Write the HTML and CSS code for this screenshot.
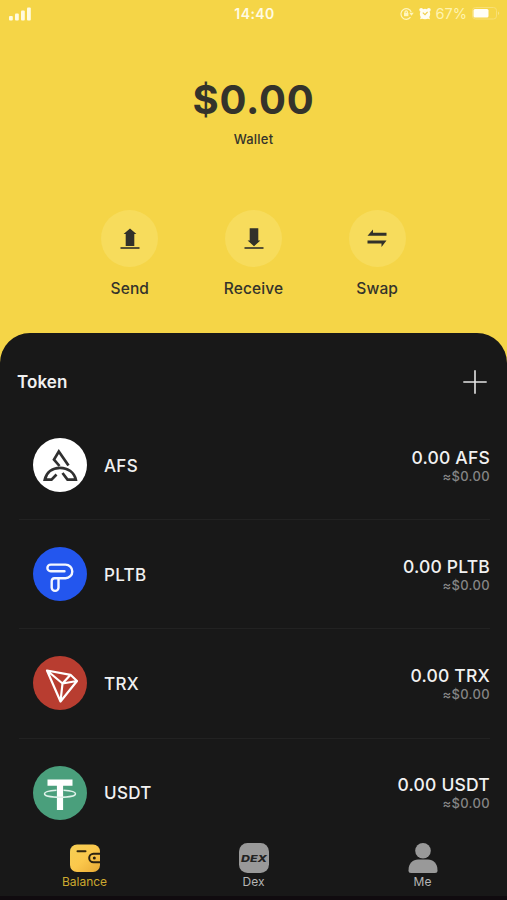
FILE: index.html
```html
<!DOCTYPE html>
<html lang="en">
<head>
<meta charset="utf-8">
<meta name="viewport" content="width=device-width, initial-scale=1">
<title>Wallet</title>
<link rel="stylesheet" href="styles.css">
</head>
<body>
<div class="app">
  <header class="status">
    <svg class="signal" width="22" height="14" viewBox="0 0 22 14" fill="#fffbe0"><rect x="0" y="9" width="3.8" height="4.5" rx="1"/><rect x="6" y="6.5" width="3.8" height="7" rx="1"/><rect x="12" y="3.6" width="3.8" height="9.9" rx="1"/><rect x="18" y=".5" width="3.8" height="13" rx="1"/></svg>
    <span class="time">14:40</span>
    <div class="indicators">
      <svg width="14" height="13" viewBox="0 0 14 13" fill="none" stroke="#fff6c0" stroke-width="1.2"><path d="M10.5 10.2A5.300 5.300 0 1 1 11.2 5"/><path d="M9.2 5.7h4.500l-2.200 3z" fill="#fff6c0" stroke="none"/><rect x="4" y="5.8" width="4.400" height="3.400" fill="#fff6c0" stroke="none"/><path d="M5 6V5a1.2 1.2 0 0 1 2.4 0v1"/></svg>
      <svg class="alarm" width="12" height="13" viewBox="0 0 12 13"><g fill="#fffdf0"><circle cx="6" cy="7" r="5.200"/><circle cx="2.2" cy="2.8" r="1.900"/><circle cx="9.8" cy="2.8" r="1.900"/><path d="M2 9.500L1 12.300 4 11.500zM10 9.500l1 2.800-3-.8z"/></g><path d="M3.800 5.600L6 7.600l2.600-2.800" fill="none" stroke="#efcf4b" stroke-width="1.2"/></svg>
      <span class="percent">67%</span>
      <svg width="28" height="13" viewBox="0 0 28 13"><rect x=".5" y=".5" width="24" height="11.5" rx="3" fill="none" stroke="#f8df74"/><rect x="1.500" y="2" width="15" height="8.5" rx="1.5" fill="#fffef6"/><path d="M26 4.5c1.6.5 1.6 3 0 3.5z" fill="#f9e384"/></svg>
    </div>
  </header>

  <section class="hero">
    <h1 class="total">$0.00</h1>
    <p class="wallet">Wallet</p>
    <nav class="actions">
      <a class="action"><span class="disc"><svg width="20" height="22" viewBox="0 0 20 22" fill="#32312a"><path d="M10 .5l6.400 5.500H14.300v12H5.700V6H3.600z"/><rect x=".5" y="19.200" width="19" height="1.600"/></svg></span>Send</a>
      <a class="action"><span class="disc"><svg width="20" height="22" viewBox="0 0 20 22" fill="#32312a"><path d="M5.700 .3h8.600V12.500h2.100L10 18.300 3.600 12.500H5.700z"/><rect x=".5" y="19.200" width="19" height="1.600"/></svg></span>Receive</a>
      <a class="action"><span class="disc"><svg width="20" height="22" viewBox="0 0 20 22" fill="#32312a"><path d="M.5 7.700L6 1.500V4.700H19.500V7.700z"/><path d="M.5 12.500H19.500L14.500 19V15.500H.5z"/></svg></span>Swap</a>
    </nav>
  </section>

  <main class="sheet">
    <div class="sheet-head">
      <h2>Token</h2>
      <svg width="24" height="24" viewBox="0 0 24 24" stroke="#e4e4e4" stroke-width="1.600"><path d="M12 .3v23.400M.3 12h23.400"/></svg>
    </div>
    <ul class="tokens">
      <li class="token">
        <svg class="coin" viewBox="0 0 54 54"><circle cx="27" cy="27" r="27" fill="#fff"/><g fill="none" stroke="#303030" stroke-width="2.700"><path d="M26.500 28L21 21.500 25.800 13.500 35.500 27.500"/><path d="M23.500 36.500L18.500 41.600H11.800C13.500 34.500 19 29.800 27 29.800S41.300 34.500 42.800 41.600H34.500L29.500 35"/></g></svg>
        <span class="name">AFS</span>
        <div class="amount"><span class="qty">0.00 AFS</span><span class="fiat">≈$0.00</span></div>
      </li>
      <li class="token">
        <svg class="coin" viewBox="0 0 54 54"><circle cx="27" cy="27" r="27" fill="#2356ee"/><path d="M31.500 24.200H17.700A3.300 3.300 0 0 1 17.700 17.600H32.500A6.800 6.800 0 0 1 32.500 31.200H21.500A3 3 0 0 0 18.700 34.200V40.500A3.400 3.400 0 0 0 25.500 40.500V32" fill="none" stroke="#f3f6ff" stroke-width="2.400" stroke-linecap="round"/></svg>
        <span class="name">PLTB</span>
        <div class="amount"><span class="qty">0.00 PLTB</span><span class="fiat">≈$0.00</span></div>
      </li>
      <li class="token">
        <svg class="coin" viewBox="0 0 54 54"><circle cx="27" cy="27" r="27" fill="#b83d30"/><path d="M14 14.500L37.500 18.800 44 25 27.500 45.500zM14 14.500L29.500 27.500 27.500 45.500M29.500 27.500L37.500 18.800M29.500 27.500L44 25" fill="none" stroke="#fff" stroke-width="2.200" stroke-linejoin="round"/></svg>
        <span class="name">TRX</span>
        <div class="amount"><span class="qty">0.00 TRX</span><span class="fiat">≈$0.00</span></div>
      </li>
      <li class="token">
        <svg class="coin" viewBox="0 0 54 54"><circle cx="27" cy="27" r="27" fill="#4a9f7c"/><path d="M14.500 13.500h25v6.300h-9.400V44h-6.200V19.800h-9.400z" fill="#fff"/><path d="M23.500 24.300C16 24.800 11.500 26 11.500 27.700c0 2.100 6.900 3.600 15.500 3.600s15.500-1.500 15.500-3.600c0-1.700-4.500-2.900-12-3.400" fill="none" stroke="#dff1e9" stroke-width="1.500"/></svg>
        <span class="name">USDT</span>
        <div class="amount"><span class="qty">0.00 USDT</span><span class="fiat">≈$0.00</span></div>
      </li>
    </ul>
  </main>

  <nav class="tabs">
    <a class="tab active"><svg width="30" height="30" viewBox="0 0 30 30"><defs><linearGradient id="gold" x1="0" y1="0" x2="1" y2="1"><stop offset="0" stop-color="#f6cf55"/><stop offset=".5" stop-color="#fbc84c"/><stop offset="1" stop-color="#e8a934"/></linearGradient></defs><rect x="0" y="1.500" width="30" height="27.500" rx="7" fill="url(#gold)"/><path d="M7.500 8.300h8" stroke="#35280f" stroke-width="2" stroke-linecap="round"/><path d="M30 10.700H23.500a4.300 4.300 0 0 0 0 8.600H30" fill="none" stroke="#2b2111" stroke-width="2"/><circle cx="24.300" cy="15" r="1.500" fill="#2b2111"/></svg>Balance</a>
    <a class="tab"><svg width="30" height="30" viewBox="0 0 30 30"><rect width="30" height="30" rx="8.500" fill="#999"/><text class="dex" x="15" y="18.500" text-anchor="middle" textLength="26" lengthAdjust="spacingAndGlyphs">DEX</text></svg>Dex</a>
    <a class="tab"><svg width="30" height="30" viewBox="0 0 30 30" fill="#999"><circle cx="15" cy="7.800" r="7.800"/><path d="M.5 27.500C.5 20 5 16.500 10 16.500H20c5 0 9.500 3.500 9.500 11Q29.500 30 27 30H3Q.5 30 .5 27.500z"/></svg>Me</a>
  </nav>
</div>
</body>
</html>
```
FILE: styles.css
```css
* { box-sizing: border-box; }

body {
  margin: 0;
  background: #f5d547;
  font-family: Inter, "Liberation Sans", sans-serif;
}

h1, h2, p, ul { margin: 0; padding: 0; }

svg { display: block; flex: none; }

.app {
  display: flex;
  flex-direction: column;
  width: 507px;
  height: 900px;
  overflow: hidden;
}

.status {
  display: grid;
  grid-template-columns: 1fr auto 1fr;
  align-items: center;
  height: 27px;
  padding: 0 7px 0 9px;
  color: #fffbe3;
}

.time { font-size: 14px; font-weight: 600; letter-spacing: .4px; }

.indicators {
  display: flex;
  align-items: center;
  justify-content: flex-end;
  gap: 5px;
}

.percent { font-size: 14.5px; color: #fff3ae; }

.hero {
  display: flex;
  flex-direction: column;
  align-items: center;
  height: 306px;
  padding-top: 48px;
  color: #34332b;
}

.total {
  font-size: 40px;
  line-height: 50px;
  font-weight: 650;
  letter-spacing: .8px;
}

.wallet {
  margin-top: 6px;
  font-size: 13px;
  line-height: 16px;
  font-weight: 500;
  letter-spacing: .2px;
}

.actions {
  display: flex;
  width: 371px;
  margin-top: 63px;
}

.action {
  display: flex;
  flex: 1;
  flex-direction: column;
  align-items: center;
  gap: 12px;
  font-size: 15.5px;
  line-height: 20px;
  font-weight: 500;
  letter-spacing: .1px;
}

.disc {
  display: grid;
  place-items: center;
  width: 57px;
  height: 57px;
  border-radius: 50%;
  background: #f7dc5c;
}

.sheet {
  flex: 1;
  min-height: 0;
  background: #181818;
  border-radius: 30px 30px 0 0;
  color: #f1f1f1;
}

.sheet-head {
  display: flex;
  align-items: center;
  justify-content: space-between;
  height: 78px;
  padding: 20px 20px 0 17px;
}

.sheet-head h2 { font-size: 17px; font-weight: 600; letter-spacing: .1px; }

.tokens { list-style: none; margin: 0 17px 0 19px; }

.token {
  display: flex;
  align-items: center;
  height: 109.2px;
  padding-left: 14px;
  border-bottom: 1px solid #222;
}

.token:last-child { border-color: transparent; }

.coin { width: 54px; height: 54px; }

.name {
  margin-left: 17px;
  padding-top: 1px;
  font-size: 17px;
  font-weight: 500;
  letter-spacing: .3px;
}

.amount {
  display: flex;
  flex-direction: column;
  align-items: flex-end;
  margin-left: auto;
  padding-top: 1px;
}

.qty { font-size: 17.5px; line-height: 20px; font-weight: 500; letter-spacing: .2px; }

.fiat { font-size: 13px; line-height: 16px; font-weight: 500; letter-spacing: .35px; color: #858585; }

.tabs {
  display: flex;
  height: 66px;
  padding-top: 9px;
  background: #181818;
  border-bottom: 4px solid #100b0f;
}

.tab {
  display: flex;
  flex: 1;
  flex-direction: column;
  align-items: center;
  gap: 1px;
  font-size: 12px;
  line-height: 15px;
  color: #b5b5b5;
}

.tab.active { color: #cda92f; }

.dex {
  font-family: Inter, sans-serif;
  font-size: 9.5px;
  font-weight: 800;
  font-style: italic;
  fill: #222;
}
```
